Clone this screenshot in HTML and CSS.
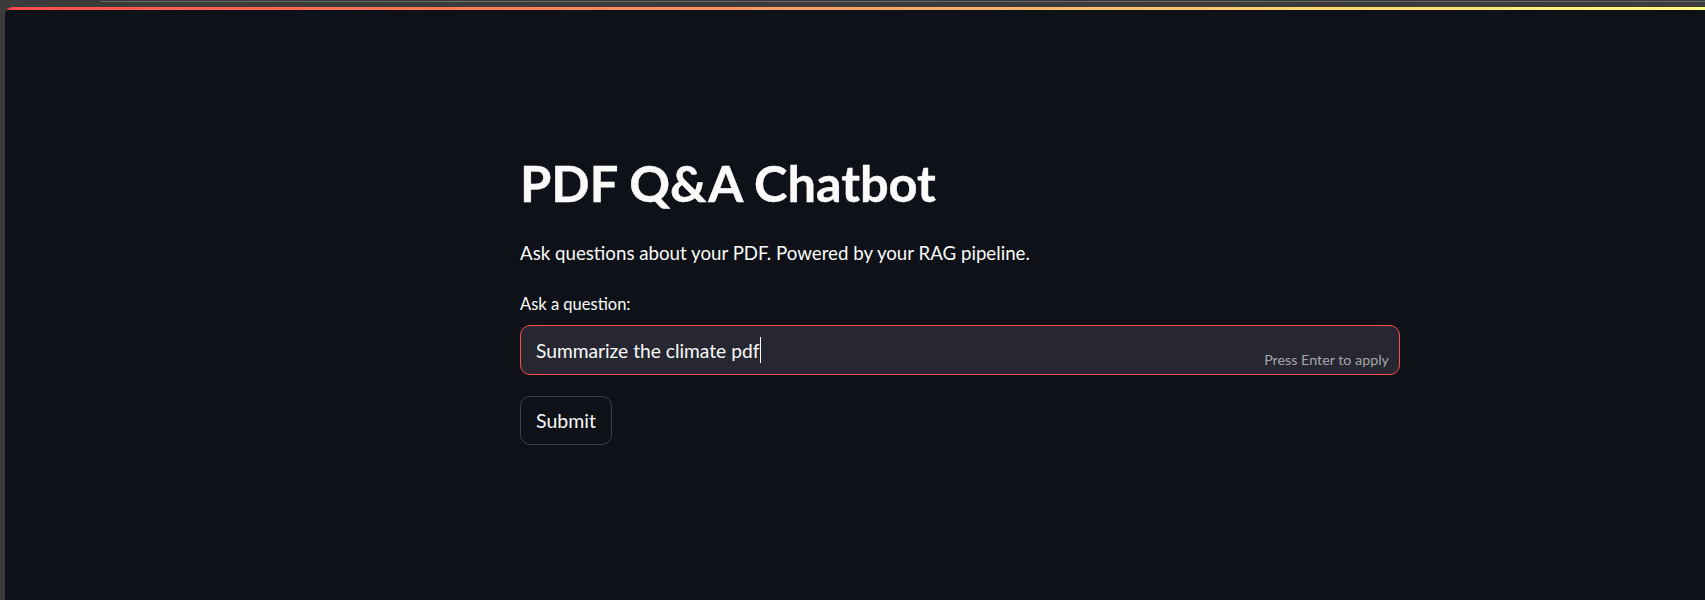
FILE: index.html
```html
<!DOCTYPE html>
<html lang="en">
<head>
<meta charset="utf-8">
<title>PDF Q&amp;A Chatbot</title>
<link rel="stylesheet" href="styles.css">
</head>
<body>
<div class="chrome">
  <div class="tabstrip"></div>
</div>
<div class="window">
  <div class="decoration"></div>
  <main class="main">
    <div class="block">
      <h1 class="title">PDF Q&amp;A Chatbot</h1>
      <p class="lead">Ask questions about your PDF. Powered by your RAG pipeline.</p>
      <label class="label">Ask a question:</label>
      <div class="input">
        <span class="input-text">Summarize the climate pdf</span><span class="caret"></span>
        <span class="hint">Press Enter to apply</span>
      </div>
      <button class="btn">Submit</button>
    </div>
  </main>
</div>
</body>
</html>
```

FILE: styles.css
```css
html, body {
  margin: 0;
  padding: 0;
}
body {
  background: #3b3b3b;
  height: 600px;
  overflow: hidden;
  font-family: Lato, "Source Sans Pro", sans-serif;
  color: #fafafa;
}
.chrome {
  height: 7px;
  display: flex;
}
.tabstrip {
  margin-left: 100px;
  flex: 1;
  height: 1px;
  border-bottom: 1px solid #676767;
  border-bottom-left-radius: 3px;
}
.window {
  margin-left: 5px;
  height: 593px;
  background: #0e1117;
  border-top-left-radius: 8px;
  overflow: hidden;
}
.decoration {
  height: 3px;
  background: linear-gradient(90deg, #ff4b4b, #fffd80);
}
.main {
  padding: 0 0 0 515px;
}
.block {
  width: 880px;
  display: flex;
  flex-direction: column;
  align-items: flex-start;
}
.title {
  margin: 143px 0 0 0;
  font-size: 50.5px;
  line-height: 60px;
  font-weight: 700;
  -webkit-text-stroke: 0.4px #fafafa;
}
.lead {
  margin: 26px 0 0 0;
  font-size: 18.7px;
  line-height: 28px;
}
.label {
  margin-top: 26px;
  font-size: 16.5px;
  line-height: 22px;
}
.input {
  position: relative;
  box-sizing: border-box;
  margin-top: 10px;
  width: 880px;
  height: 50px;
  background: #262730;
  border: 1px solid #ff4b4b;
  border-radius: 10px;
  padding: 0 15px;
  display: flex;
  align-items: center;
  font-size: 19.2px;
}
.caret {
  display: inline-block;
  width: 1px;
  height: 26px;
  background: #fafafa;
  margin-left: 1px;
}
.hint {
  position: absolute;
  right: 10px;
  bottom: 6px;
  font-size: 14.3px;
  color: #a5a6aa;
}
.btn {
  margin-top: 21px;
  box-sizing: border-box;
  height: 49px;
  padding: 0 15px;
  background: #0e1117;
  border: 1px solid #3e4045;
  border-radius: 10px;
  color: #fafafa;
  font-family: inherit;
  font-size: 19.5px;
}
```
